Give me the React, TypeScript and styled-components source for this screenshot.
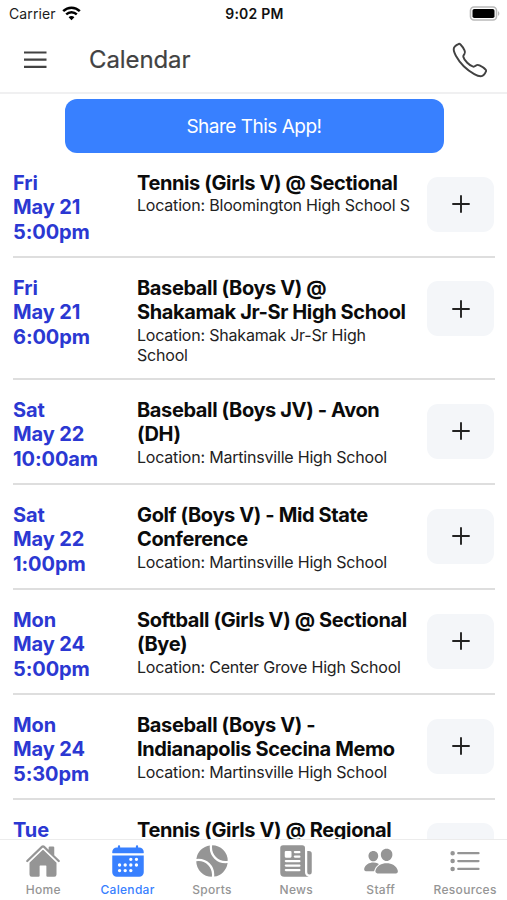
import React from "react";
import styled, { createGlobalStyle } from "styled-components";
import {
  IoHome,
  IoCalendar,
  IoTennisball,
  IoNewspaper,
  IoPeople,
  IoListOutline,
  IoCallOutline,
} from "react-icons/io5";

const GlobalStyle = createGlobalStyle`
  * { box-sizing: border-box; }
  html, body, #root { margin: 0; height: 100%; }
  body {
    background: #fff;
    font-family: Inter, "Liberation Sans", sans-serif;
    overflow: hidden;
  }
  button { font: inherit; border: 0; padding: 0; background: none; }
`;

const Screen = styled.div`
  width: 507px;
  height: 900px;
  display: flex;
  flex-direction: column;
  overflow: hidden;
  background: #fff;
`;

const StatusBar = styled.div`
  flex: none;
  height: 27px;
  padding: 0 7px 0 9px;
  display: grid;
  grid-template-columns: 1fr auto 1fr;
  align-items: center;
  font-size: 14px;
  color: #1c1c1c;
`;

const Carrier = styled.div`
  display: flex;
  align-items: center;
  gap: 6px;
  letter-spacing: 0.1px;
`;

const Clock = styled.div`
  font-weight: 600;
  color: #111;
  letter-spacing: 0.25px;
`;

const BatteryWrap = styled.div`
  display: flex;
  justify-content: flex-end;
`;

const Header = styled.header`
  flex: none;
  height: 67px;
  padding: 0 17px 0 24px;
  display: flex;
  align-items: center;
  border-bottom: 2px solid #f0f0f1;
  color: #424242;
`;

const HeaderTitle = styled.h1`
  flex: 1;
  margin: 0 0 0 42px;
  font-size: 24px;
  font-weight: 400;
  letter-spacing: -0.1px;
  -webkit-text-stroke: 0.2px #424242;
`;

const CallIcon = styled(IoCallOutline)`
  width: 40px;
  height: 40px;

  path { stroke-width: 25px; }
`;

const Content = styled.main`
  flex: 1;
  min-height: 0;
  overflow: hidden;
  padding: 5px 13px 0;
  display: flex;
  flex-direction: column;
`;

const ShareButton = styled.button`
  flex: none;
  align-self: center;
  width: 379px;
  height: 54px;
  margin-left: 1px;
  border-radius: 12px;
  background: #3880ff;
  color: #fff;
  font-size: 19px;
  letter-spacing: -0.5px;
`;

const Row = styled.article`
  flex: none;
  display: grid;
  grid-template-columns: 124px 278px 79px;
  padding: 18px 0 12px;
  border-bottom: 2px solid #dedede;
  justify-content: start;
  width: 482px;
`;

const DateBlock = styled.div`
  color: #2b38d2;
  font-size: 20px;
  font-weight: 700;
  line-height: 24.33px;
  letter-spacing: -0.1px;
`;

const EventTitle = styled.h2`
  margin: 0;
  font-size: 20px;
  line-height: 24.33px;
  font-weight: 700;
  letter-spacing: -0.38px;
  color: #0b0b0b;
  white-space: nowrap;
`;

const Location = styled.p`
  margin: 0;
  font-size: 16px;
  line-height: 20.7px;
  letter-spacing: -0.2px;
  color: #222;
  white-space: nowrap;
`;

const AddButton = styled.button`
  margin: 5.5px 0 0 12px;
  width: 67px;
  height: 55px;
  border-radius: 11px;
  background: #f4f6f9;
  display: flex;
  align-items: center;
  justify-content: center;
  color: #222;
`;

const TabBar = styled.nav`
  flex: none;
  height: 61px;
  border-top: 1px solid #ececec;
  background: #fff;
  display: grid;
  grid-template-columns: repeat(6, 84.4px);
  padding-left: 1px;
  position: relative;
`;

const Tab = styled.button<{ $active?: boolean }>`
  display: flex;
  flex-direction: column;
  align-items: center;
  padding-top: 3px;
  color: ${(p) => (p.$active ? "#3880ff" : "#959595")};

  svg { flex: none; width: 36px; height: 36px; }
`;

const TabLabel = styled.span`
  margin-top: 3px;
  font-size: 12px;
  line-height: 15px;
  font-weight: 500;
  letter-spacing: 0.3px;
`;

const WifiIcon = () => (
  <svg width="19" height="15" viewBox="0 0 19 15" fill="none" stroke="#000">
    <path d="M1.2 5.2C5.9.6 13.1.6 17.8 5.2" strokeWidth="2.5" />
    <path d="M4.2 8.4c3-2.9 7.6-2.9 10.6 0" strokeWidth="2.4" />
    <path d="M9.5 14.2 6.6 11.3c1.6-1.6 4.2-1.6 5.8 0Z" fill="#000" stroke="none" />
  </svg>
);

const BatteryIcon = () => (
  <svg width="31" height="15" viewBox="0 0 31 15">
    <rect x="1.5" y="1" width="26" height="13" rx="3.5" fill="#fff" stroke="#b9b9b9" strokeWidth="1.6" />
    <rect x="3.5" y="3" width="22" height="9" rx="1.8" fill="#000" />
    <path d="M29 5.2c1.8.7 1.8 3.9 0 4.6Z" fill="#b9b9b9" />
  </svg>
);

const MenuIcon = () => (
  <svg width="23" height="17" viewBox="0 0 23 17" stroke="#424242" strokeWidth="2.2">
    <path d="M0 1.5h22.5M0 8.7h22.5M0 15.8h22.5" />
  </svg>
);

const PlusIcon = () => (
  <svg width="18" height="18" viewBox="0 0 18 18" stroke="currentColor" strokeWidth="1.9" strokeLinecap="round">
    <path d="M9 1v16M1 9h16" />
  </svg>
);

type CalendarEvent = {
  date: [string, string, string];
  title: string[];
  location: string[];
};

const events: CalendarEvent[] = [
  {
    date: ["Fri", "May 21", "5:00pm"],
    title: ["Tennis (Girls V) @ Sectional"],
    location: ["Location: Bloomington High School S"],
  },
  {
    date: ["Fri", "May 21", "6:00pm"],
    title: ["Baseball (Boys V) @", "Shakamak Jr-Sr High School"],
    location: ["Location: Shakamak Jr-Sr High", "School"],
  },
  {
    date: ["Sat", "May 22", "10:00am"],
    title: ["Baseball (Boys JV) - Avon", "(DH)"],
    location: ["Location: Martinsville High School"],
  },
  {
    date: ["Sat", "May 22", "1:00pm"],
    title: ["Golf (Boys V) - Mid State", "Conference"],
    location: ["Location: Martinsville High School"],
  },
  {
    date: ["Mon", "May 24", "5:00pm"],
    title: ["Softball (Girls V) @ Sectional", "(Bye)"],
    location: ["Location: Center Grove High School"],
  },
  {
    date: ["Mon", "May 24", "5:30pm"],
    title: ["Baseball (Boys V) -", "Indianapolis Scecina Memo"],
    location: ["Location: Martinsville High School"],
  },
];

const tabs = [
  { label: "Home", Icon: IoHome },
  { label: "Calendar", Icon: IoCalendar, active: true },
  { label: "Sports", Icon: IoTennisball },
  { label: "News", Icon: IoNewspaper },
  { label: "Staff", Icon: IoPeople },
  { label: "Resources", Icon: IoListOutline },
];

export default function App() {
  return (
    <>
      <GlobalStyle />
      <Screen>
        <StatusBar>
          <Carrier>
            Carrier <WifiIcon />
          </Carrier>
          <Clock>9:02 PM</Clock>
          <BatteryWrap>
            <BatteryIcon />
          </BatteryWrap>
        </StatusBar>
        <Header>
          <MenuIcon />
          <HeaderTitle>Calendar</HeaderTitle>
          <CallIcon />
        </Header>
        <Content>
          <ShareButton>Share This App!</ShareButton>
          {events.map((event, i) => (
            <Row key={i}>
              <DateBlock>
                {event.date.map((line) => (
                  <div key={line}>{line}</div>
                ))}
              </DateBlock>
              <div>
                {event.title.map((line) => (
                  <EventTitle key={line}>{line}</EventTitle>
                ))}
                {event.location.map((line) => (
                  <Location key={line}>{line}</Location>
                ))}
              </div>
              <AddButton aria-label="Add">
                <PlusIcon />
              </AddButton>
            </Row>
          ))}
          <Row>
            <DateBlock>Tue</DateBlock>
            <EventTitle>Tennis (Girls V) @ Regional</EventTitle>
            <AddButton aria-label="Add" />
          </Row>
        </Content>
        <TabBar>
          {tabs.map(({ label, Icon, active }) => (
            <Tab key={label} $active={active}>
              <Icon />
              <TabLabel>{label}</TabLabel>
            </Tab>
          ))}
        </TabBar>
      </Screen>
    </>
  );
}
